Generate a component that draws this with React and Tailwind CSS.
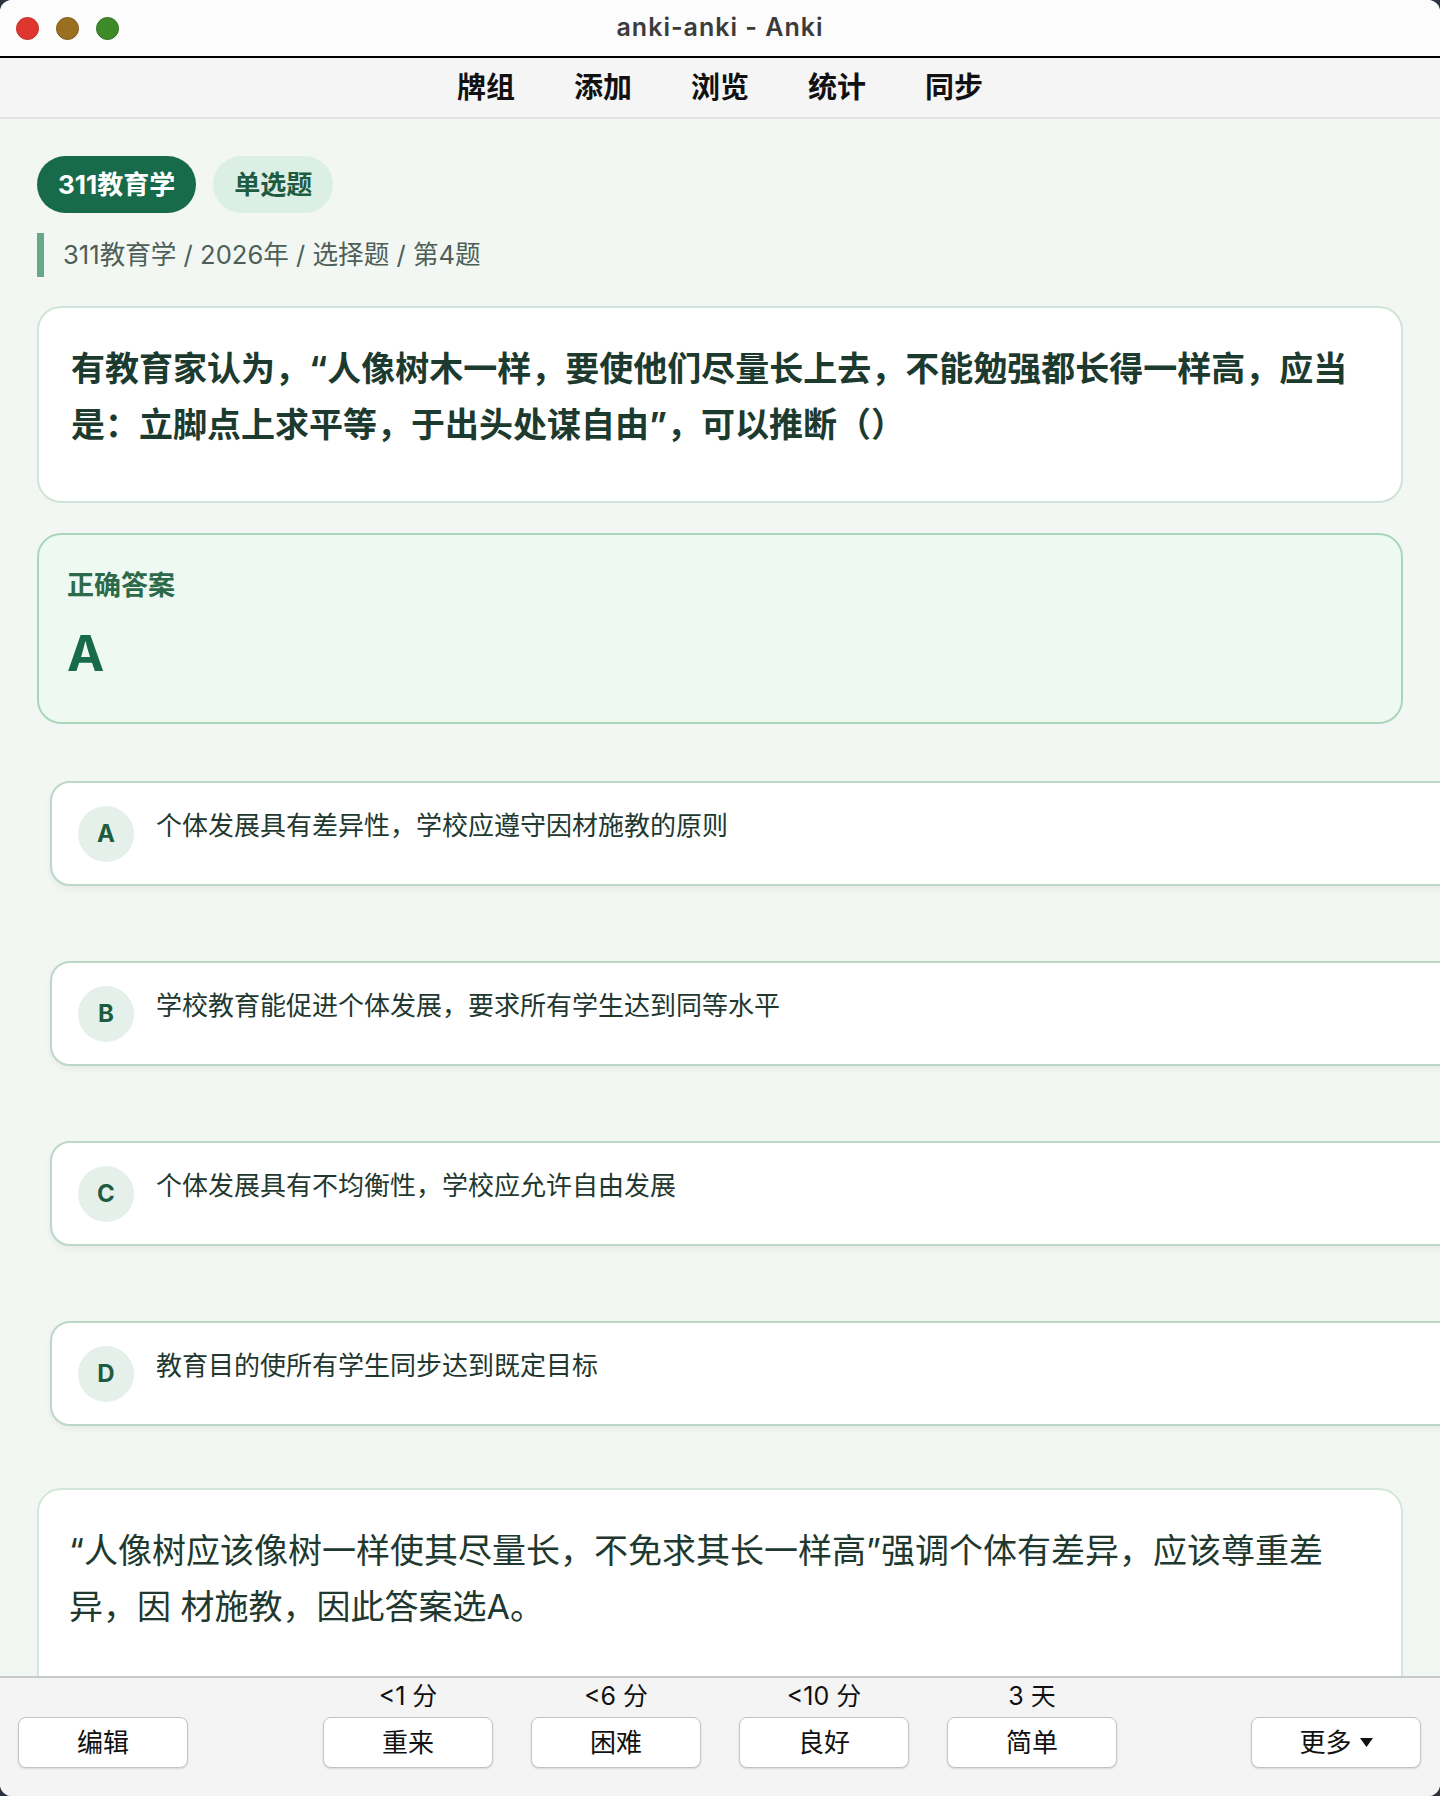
import React from "react";

const options = [
  { k: "A", t: "个体发展具有差异性，学校应遵守因材施教的原则" },
  { k: "B", t: "学校教育能促进个体发展，要求所有学生达到同等水平" },
  { k: "C", t: "个体发展具有不均衡性，学校应允许自由发展" },
  { k: "D", t: "教育目的使所有学生同步达到既定目标" },
];

const answers = [
  { l: "<1 分", b: "重来" },
  { l: "<6 分", b: "困难" },
  { l: "<10 分", b: "良好" },
  { l: "3 天", b: "简单" },
];

function Btn({ children }) {
  return (
    <div className="h-[51px] w-[170px] flex items-center justify-center bg-white border-[1.5px] border-[#c3c3c3] rounded-[8px] shadow-[0_1px_2px_rgba(0,0,0,0.12)] text-[26px] text-[#111]">
      {children}
    </div>
  );
}

export default function App() {
  return (
    <div className="w-[1440px] h-[1796px] bg-[#2c3440] font-['Inter','Noto_Sans_CJK_SC',sans-serif]">
      <div className="w-full h-full rounded-[12px] overflow-hidden flex flex-col bg-[#f2f7f3]">
        {/* title bar */}
        <div className="h-[58px] shrink-0 bg-[#fcfcfc] border-b-2 border-black grid grid-cols-[1fr_auto_1fr] items-center">
          <div className="flex items-center gap-[17px] pl-[16px]">
            <span className="w-[23px] h-[23px] rounded-full bg-[#df372d] border border-[#c22c23]" />
            <span className="w-[23px] h-[23px] rounded-full bg-[#9a6f22] border border-[#7e5a1a]" />
            <span className="w-[23px] h-[23px] rounded-full bg-[#3c8a28] border border-[#2f7020]" />
          </div>
          <div className="text-[25px] font-semibold tracking-[1px] text-[#3b3b3b]">anki-anki - Anki</div>
          <div />
        </div>
        {/* menu bar */}
        <div className="h-[61px] shrink-0 bg-[#f5f5f5] border-b-2 border-[#e2e2e2] flex items-center justify-center gap-[59px]">
          {["牌组", "添加", "浏览", "统计", "同步"].map((m) => (
            <span key={m} className="text-[29px] font-bold text-[#111]">{m}</span>
          ))}
        </div>
        {/* content */}
        <div className="flex-1 overflow-hidden px-[37px] pt-[37px]">
          <div className="flex gap-[17px]">
            <span className="h-[57px] px-[21px] flex items-center rounded-full bg-[#176b4b] text-white text-[26px] font-bold">311教育学</span>
            <span className="h-[57px] px-[21px] flex items-center rounded-full bg-[#dbefe4] text-[#1e5b42] text-[26px] font-bold">单选题</span>
          </div>
          <div className="mt-[20px] h-[44px] flex items-center border-l-[7px] border-[#67a889] pl-[19px] text-[25.6px] text-[#4d5f58]">
            311教育学 / 2026年 / 选择题 / 第4题
          </div>
          <div className="mt-[29px] h-[197px] bg-white border-2 border-[#cfe3d8] rounded-[24px] px-[32px] pt-[33px]">
            <p className="text-[34px] leading-[56px] font-bold text-[#1d3a2f]">
              有教育家认为，“人像树木一样，要使他们尽量长上去，不能勉强都长得一样高，应当是：立脚点上求平等，于出头处谋自由”，可以推断（）
            </p>
          </div>
          <div className="mt-[30px] h-[191px] bg-[#eef9f1] border-2 border-[#aad7bc] rounded-[24px] px-[28px] pt-[32px]">
            <div className="text-[27px] leading-[38px] font-bold text-[#2d6a4a]">正确答案</div>
            <div className="mt-[18px] text-[50px] leading-[60px] font-bold text-[#176b4b]">A</div>
          </div>
          <div className="mt-[57px] flex flex-col gap-[75px] ml-[13px]">
            {options.map((o) => (
              <div key={o.k} className="h-[105px] w-[1420px] shrink-0 bg-white border-2 border-[#bcd6c8] rounded-[20px] shadow-[0_3px_6px_rgba(0,0,0,0.05)] flex items-center pl-[26px] gap-[22px]">
                <span className="w-[56px] h-[56px] shrink-0 rounded-full bg-[#e5f0ea] flex items-center justify-center text-[24px] font-bold text-[#1d5c40]">{o.k}</span>
                <span className="text-[26px] leading-[36px] text-[#22382f] pb-[16px]">{o.t}</span>
              </div>
            ))}
          </div>
          <div className="mt-[62px] h-[260px] bg-white border-2 border-[#d3e7db] rounded-[24px] px-[30px] pt-[33px]">
            <p className="text-[34px] leading-[56px] text-[#21382f]">
              “人像树应该像树一样使其尽量长，不免求其长一样高”强调个体有差异，应该尊重差异，因 材施教，因此答案选A。
            </p>
          </div>
        </div>
        {/* bottom bar */}
        <div className="h-[120px] shrink-0 border-t-2 border-[#c9c9c9] bg-[#f4f4f4] flex justify-between pl-[18px] pr-[19px] pt-[4px]">
          <div className="flex flex-col gap-[7px]">
            <div className="h-[28px]" />
            <div className="w-[171px]"><Btn>编辑</Btn></div>
          </div>
          <div className="flex gap-[38px]">
            {answers.map((a) => (
              <div key={a.b} className="flex flex-col items-center gap-[7px]">
                <div className="h-[28px] leading-[28px] text-[25px] text-[#111]">{a.l}</div>
                <Btn>{a.b}</Btn>
              </div>
            ))}
          </div>
          <div className="flex flex-col gap-[7px]">
            <div className="h-[28px]" />
            <Btn>
              <span className="flex items-center gap-[8px]">
                更多
                <svg width="13" height="9" viewBox="0 0 13 9"><path d="M0 0 L13 0 L6.5 9 Z" fill="#111" /></svg>
              </span>
            </Btn>
          </div>
        </div>
      </div>
    </div>
  );
}
